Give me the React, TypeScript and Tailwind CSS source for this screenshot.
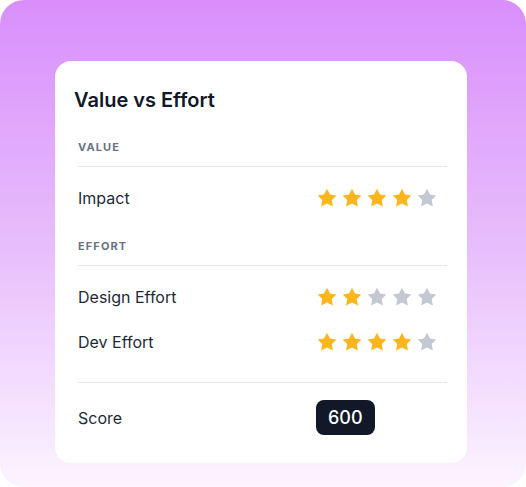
import React from "react";

const font = { fontFamily: "Inter, 'Noto Sans', sans-serif" };

function Star({ filled }: { filled: boolean }) {
  return (
    <svg
      viewBox="0 0 24 24"
      className={filled ? "size-[22px] fill-[#fbb61d]" : "size-[22px] fill-[#c4c8d2]"}
    >
      <polygon points="12,2 15.3,8.2 22.2,9.3 17.2,14.3 18.4,21.2 12,17.9 5.6,21.2 6.8,14.3 1.8,9.3 8.7,8.2" />
    </svg>
  );
}

function Stars({ value }: { value: number }) {
  return (
    <div className="flex gap-[3px]">
      {[1, 2, 3, 4, 5].map((i) => (
        <Star key={i} filled={i <= value} />
      ))}
    </div>
  );
}

function SectionHeader({ label }: { label: string }) {
  return (
    <div className="border-b border-[#e5e7eb] pb-[11px] text-[11px] leading-4 font-bold tracking-[0.1em] text-[#6b7280]">
      {label}
    </div>
  );
}

function Row({ label, children }: { label: string; children: React.ReactNode }) {
  return (
    <div className="grid grid-cols-[1fr_131px] items-center">
      <span className="text-base leading-6 text-[#1f2937]">{label}</span>
      {children}
    </div>
  );
}

export default function App() {
  return (
    <div
      style={font}
      className="w-[526px] h-[487px] rounded-3xl bg-gradient-to-b from-[#d98efb] via-[#e7bdfb] to-[#fcf4ff] pt-[61px] pl-[55px]"
    >
      <div className="w-[412px] h-[402px] rounded-2xl bg-white pt-[25px] pl-[19px] pr-5">
        <h1 className="text-xl leading-7 font-semibold text-[#111827]">Value vs Effort</h1>
        <div className="pl-1">
          <div className="mt-[25px]">
            <SectionHeader label="VALUE" />
            <div className="mt-[19px]">
              <Row label="Impact">
                <Stars value={4} />
              </Row>
            </div>
          </div>
          <div className="mt-[28px]">
            <SectionHeader label="EFFORT" />
            <div className="mt-[19px] flex flex-col gap-[21px]">
              <Row label="Design Effort">
                <Stars value={2} />
              </Row>
              <Row label="Dev Effort">
                <Stars value={4} />
              </Row>
            </div>
          </div>
          <div className="mt-[28px] border-t border-[#e5e7eb] pt-[17px]">
            <Row label="Score">
              <div>
                <span className="inline-flex h-[35px] items-center rounded-lg bg-[#111827] px-3 text-lg font-medium text-white">
                  600
                </span>
              </div>
            </Row>
          </div>
        </div>
      </div>
    </div>
  );
}
